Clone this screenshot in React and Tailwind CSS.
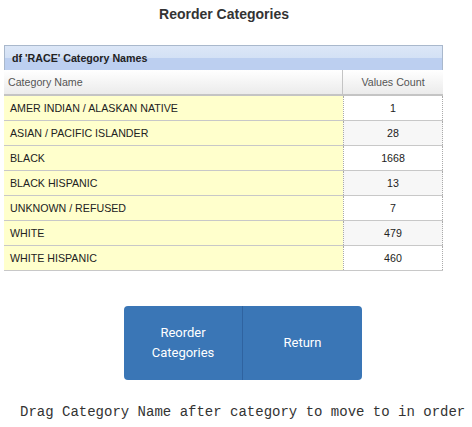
import React from 'react';

const rows = [
    ['AMER INDIAN / ALASKAN NATIVE', 1],
    ['ASIAN / PACIFIC ISLANDER', 28],
    ['BLACK', 1668],
    ['BLACK HISPANIC', 13],
    ['UNKNOWN / REFUSED', 7],
    ['WHITE', 479],
    ['WHITE HISPANIC', 460],
];

const App = () => {
    return (
        <div className="w-[472px] h-[427px] bg-white font-['Liberation_Sans',Arial,sans-serif] text-[#333]">
            <h1 className="w-[448px] pt-[5px] h-[45px] text-center text-[14px] font-bold leading-[18px]">Reorder Categories</h1>

            <div className="ml-[4px] w-[439px]">
                {/* caption */}
                <div className="h-[25px] border border-[#a9b8cc] border-b-0 bg-[linear-gradient(#dce7f7_0%,#d3e1f5_50%,#bccff0_52%,#bccff0_100%)] pl-[7px] text-[10.67px] font-bold leading-[24px] text-[#222]">
                    df 'RACE' Category Names
                </div>
                {/* header */}
                <div className="flex h-[26px] border-b-2 border-[#c4c4c4] bg-[linear-gradient(#ffffff,#ebebeb)] text-[10.67px] leading-[24px] text-[#555]">
                    <div className="w-[339px] pl-[4px] border-r border-[#c4c4c4]">Category Name</div>
                    <div className="flex-1 text-center">Values Count</div>
                </div>
                {/* rows */}
                {rows.map(([name, count], i) => (
                    <div key={name} className="flex h-[25px] border-b border-[#c8c8c8] text-[10.67px] leading-[24px] text-[#222]">
                        <div className="w-[339px] pl-[6px] bg-[#ffffcc]">{name}</div>
                        <div className={`flex-1 text-center border-l border-r border-dotted border-[#aaa] ${i % 2 === 1 ? 'bg-[#f7f7f7]' : 'bg-white'}`}>
                            {count}
                        </div>
                    </div>
                ))}
            </div>

            <div className="mt-[35px] ml-[124px] flex w-[238px] h-[74px] rounded-[4px] bg-[#3a76b6] text-white text-[13px] leading-[20px] font-['Roboto','Liberation_Sans',sans-serif] overflow-hidden">
                <button type="button" className="w-[119px] border-r border-[#2f63a0] flex items-center justify-center text-center">
                    Reorder<br />Categories
                </button>
                <button type="button" className="flex-1 flex items-center justify-center">
                    Return
                </button>
            </div>

            <p className="mt-[24px] pl-[20px] font-['Liberation_Mono','Courier_New',monospace] text-[14px] leading-[16px] text-[#333] whitespace-nowrap">
                Drag Category Name after category to move to in order
            </p>
        </div>
    );
};

export default App;
